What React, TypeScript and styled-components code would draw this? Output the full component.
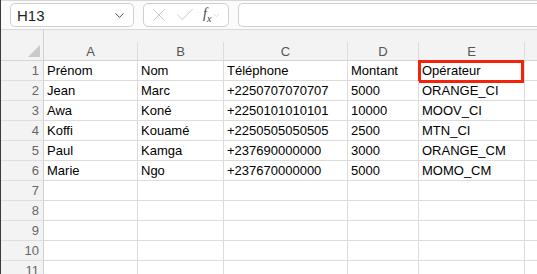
import React from 'react';
import styled, { createGlobalStyle } from 'styled-components';
import { ChevronDown, X, Check } from 'lucide-react';

const GlobalStyle = createGlobalStyle`
  html, body {
    margin: 0;
    padding: 0;
    background: #ffffff;
    overflow: hidden;
  }
  body {
    font-family: 'Liberation Sans', Arial, sans-serif;
  }
`;

const columns = [
  { letter: 'A', width: 94 },
  { letter: 'B', width: 86 },
  { letter: 'C', width: 124 },
  { letter: 'D', width: 71 },
  { letter: 'E', width: 106 },
  { letter: '', width: 60 }
];

const rows: string[][] = [
  ['Prénom', 'Nom', 'Téléphone', 'Montant', 'Opérateur'],
  ['Jean', 'Marc', '+2250707070707', '5000', 'ORANGE_CI'],
  ['Awa', 'Koné', '+2250101010101', '10000', 'MOOV_CI'],
  ['Koffi', 'Kouamé', '+2250505050505', '2500', 'MTN_CI'],
  ['Paul', 'Kamga', '+237690000000', '3000', 'ORANGE_CM'],
  ['Marie', 'Ngo', '+237670000000', '5000', 'MOMO_CM'],
  [], [], [], [], []
];

const App: React.FC = () => {
  return (
    <Window>
      <GlobalStyle />
      <Toolbar>
        <NameBox>
          <span>H13</span>
          <ChevronDown size={15} strokeWidth={1.4} color="#333" />
        </NameBox>
        <ActionBox>
          <X size={22} strokeWidth={0.9} color="#bdbdbd" />
          <Check size={22} strokeWidth={0.9} color="#bdbdbd" />
          <Fx>
            f<sub>x</sub>
          </Fx>
          <ChevronDown size={9} strokeWidth={1.4} color="#c4c4c4" />
        </ActionBox>
        <FormulaBar />
      </Toolbar>
      <Sheet>
        <Corner>
          <Triangle />
        </Corner>
        {columns.map((c, i) => (
          <ColHeader key={i}>
            <Letter>{c.letter}</Letter>
          </ColHeader>
        ))}
        {rows.map((r, ri) => (
          <React.Fragment key={ri}>
            <RowHeader>{ri + 1}</RowHeader>
            {columns.map((c, ci) => (
              <Cell key={ci}>
                {r[ci] ?? ''}
                {ri === 0 && ci === 4 && <Highlight />}
              </Cell>
            ))}
          </React.Fragment>
        ))}
      </Sheet>
    </Window>
  );
};

export default App;

const Window = styled.div`
  width: 537px;
  height: 274px;
  border-left: 1px solid #3a3a3a;
  box-sizing: border-box;
  overflow: hidden;
  background: #ffffff;
`;

const Toolbar = styled.div`
  display: flex;
  align-items: center;
  gap: 9px;
  height: 30px;
  padding: 0 0 0 9px;
  box-sizing: border-box;
  border-top: 1px solid #d6d6d6;
  border-bottom: 1px solid #d9d9d9;
  background: #fbfbfb;
`;

const Box = styled.div`
  height: 24px;
  box-sizing: border-box;
  border: 1px solid #cfcfcf;
  border-radius: 5px;
  background: #ffffff;
  display: flex;
  align-items: center;
`;

const NameBox = styled(Box)`
  width: 124px;
  justify-content: space-between;
  padding: 0 6px 0 6px;
  font-family: 'Liberation Sans', Arial, sans-serif;
  font-size: 15px;
  color: #222;
`;

const ActionBox = styled(Box)`
  width: 86px;
  padding: 0 4px 0 4px;
  gap: 4px;
`;

const Fx = styled.span`
  font-family: 'Liberation Serif', 'Times New Roman', serif;
  font-style: italic;
  font-size: 14px;
  color: #444;
  margin-left: 3px;
  margin-right: -3px;

  sub {
    font-size: 10px;
  }
`;

const FormulaBar = styled(Box)`
  flex: 1;
  border-radius: 5px 0 0 5px;
  border-right: none;
`;

const Sheet = styled.div`
  display: grid;
  grid-template-columns: 43px ${columns.map((c) => `${c.width}px`).join(' ')};
  grid-template-rows: 31px;
  grid-auto-rows: 20px;
`;

const Corner = styled.div`
  position: relative;
  background: #f3f3f3;
  border-right: 1px solid #cfcfcf;
  border-bottom: 1px solid #d4d4d4;
  box-sizing: border-box;
`;

const Triangle = styled.div`
  position: absolute;
  right: 3px;
  bottom: 3px;
  width: 12px;
  height: 12px;
  background: #c9c9c9;
  clip-path: polygon(100% 0, 100% 100%, 0 100%);
`;

const ColHeader = styled.div`
  background: #f3f3f3;
  border-bottom: 1px solid #d4d4d4;
  box-sizing: border-box;
  display: flex;
  align-items: flex-end;
`;

const Letter = styled.div`
  width: 100%;
  height: 18px;
  box-sizing: border-box;
  border-right: 1px solid #dcdcdc;
  text-align: center;
  font-family: 'Liberation Sans', Arial, sans-serif;
  font-size: 13px;
  line-height: 19px;
  color: #555;
`;

const RowHeader = styled.div`
  background: #f3f3f3;
  border-right: 1px solid #cfcfcf;
  border-bottom: 1px solid #dedede;
  box-sizing: border-box;
  text-align: right;
  padding-right: 4px;
  font-family: 'Liberation Sans', Arial, sans-serif;
  font-size: 13px;
  line-height: 19px;
  color: #666;
`;

const Cell = styled.div`
  position: relative;
  border-right: 1px solid #dcdcdc;
  border-bottom: 1px solid #dcdcdc;
  box-sizing: border-box;
  padding-left: 3px;
  font-family: 'Liberation Sans', Arial, sans-serif;
  font-size: 13px;
  line-height: 19px;
  color: #000;
  white-space: nowrap;
`;

const Highlight = styled.div`
  position: absolute;
  left: -1px;
  top: -1px;
  right: 0;
  bottom: -3px;
  border: 3px solid #f4220b;
  pointer-events: none;
`;
